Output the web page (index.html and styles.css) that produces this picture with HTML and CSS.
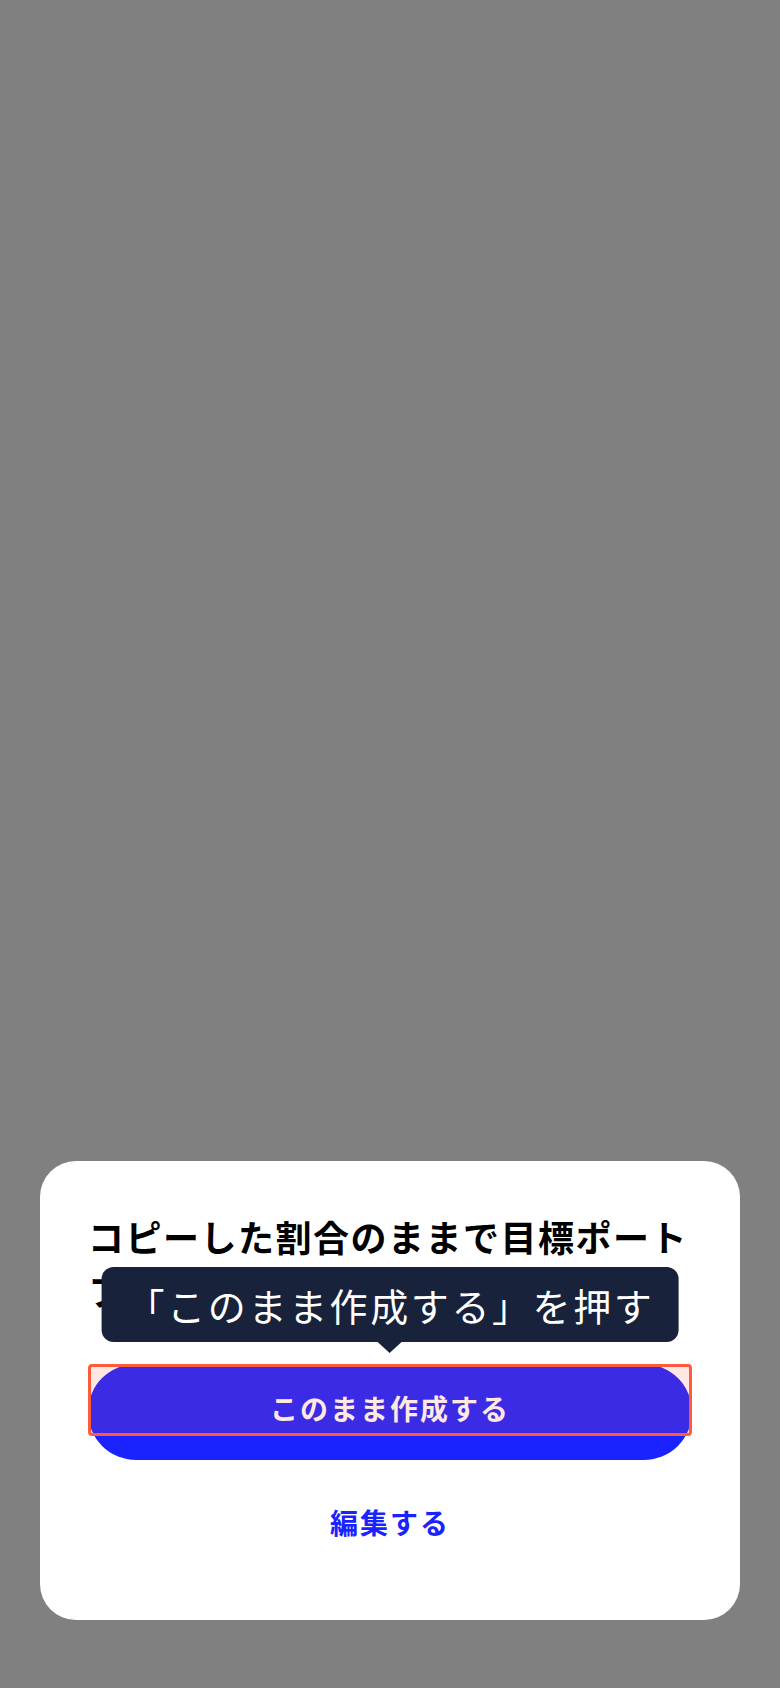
FILE: index.html
```html
<!DOCTYPE html>
<html lang="ja">
<head>
<meta charset="utf-8">
<title>確認</title>
<link rel="stylesheet" href="styles.css">
</head>
<body>
<div class="screen">
  <div class="sheet">
    <h1 class="title">コピーした割合のままで目標ポートフォリオを作成しますか？</h1>
    <div class="primary-wrap">
      <div class="tooltip">「このまま作成する」を押す</div>
      <button class="btn-primary">このまま作成する</button>
      <div class="highlight"></div>
    </div>
    <button class="btn-secondary">編集する</button>
  </div>
</div>
</body>
</html>
```

FILE: styles.css
```css
* { box-sizing: border-box; }
html, body {
  margin: 0;
  padding: 0;
  height: 100%;
}
body {
  background: #808080;
  font-family: "Noto Sans CJK JP", "Noto Sans", sans-serif;
}
.screen {
  height: 1688px;
  display: flex;
  flex-direction: column;
  justify-content: flex-end;
  padding: 0 40px 68px;
}
.sheet {
  background: #ffffff;
  border-radius: 36px;
  padding: 48px 48px 50px;
  display: flex;
  flex-direction: column;
}
.title {
  margin: 0;
  font-size: 36px;
  line-height: 54px;
  font-weight: 700;
  letter-spacing: 1.5px;
  color: #000;
}
.primary-wrap {
  position: relative;
  margin-top: 47px;
}
.btn-primary {
  display: block;
  width: 100%;
  height: 96px;
  border: none;
  border-radius: 48px;
  background: #1a22ff;
  color: #fff;
  font-family: inherit;
  font-size: 28px;
  font-weight: 700;
  letter-spacing: 2px;
  padding: 0 0 8px;
}
.highlight {
  position: absolute;
  left: 0;
  right: 0;
  top: 0;
  height: 72px;
  border: 3px solid #ff5a3c;
  border-radius: 4px;
  background: rgba(255, 99, 71, 0.15);
  pointer-events: none;
}
.tooltip {
  position: absolute;
  left: 50%;
  bottom: calc(100% + 22px);
  transform: translateX(-50%);
  height: 75px;
  line-height: 75px;
  padding: 0 24px 0 25px;
  white-space: nowrap;
  background: #18223a;
  color: #fff;
  border-radius: 12px;
  font-size: 38px;
  letter-spacing: 2.6px;
  font-weight: 400;
}
.tooltip::after {
  content: "";
  position: absolute;
  left: 50%;
  top: 100%;
  transform: translateX(-50%);
  border-left: 12px solid transparent;
  border-right: 12px solid transparent;
  border-top: 11px solid #18223a;
}
.btn-secondary {
  display: block;
  width: 100%;
  height: 96px;
  margin-top: 14px;
  border: none;
  background: transparent;
  color: #1a22ff;
  font-family: inherit;
  font-size: 28px;
  font-weight: 700;
  letter-spacing: 2px;
}
```
